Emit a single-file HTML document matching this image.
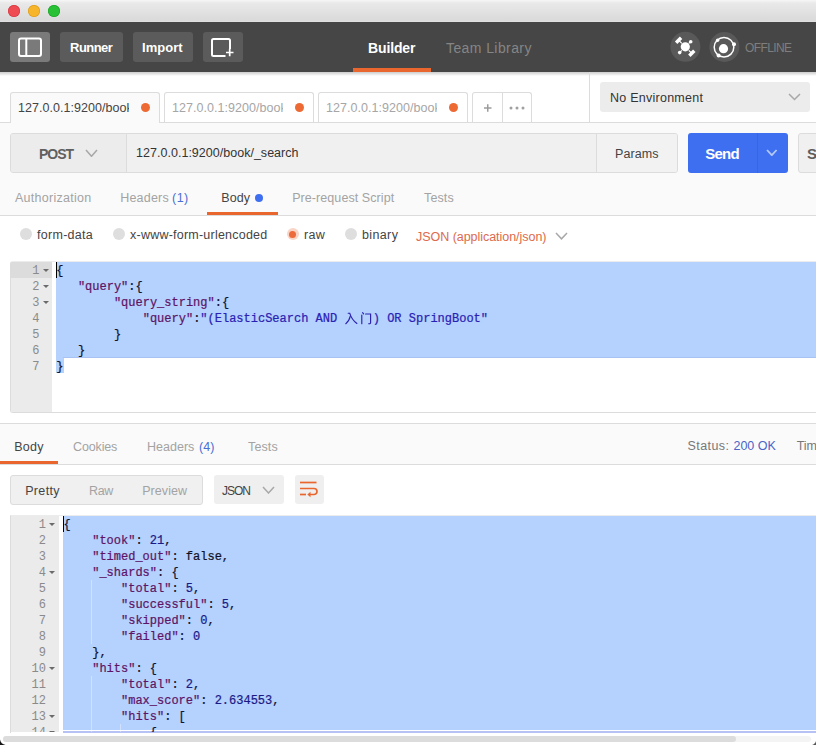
<!DOCTYPE html>
<html>
<head>
<meta charset="utf-8">
<title>Postman</title>
<style>
*{box-sizing:border-box;margin:0;padding:0}
html,body{width:816px;height:745px;overflow:hidden;background:#fff;font-family:"Liberation Sans",sans-serif;}
#app{position:relative;width:816px;height:745px;overflow:hidden;background:#fff}
.a{position:absolute}
.t{position:absolute;white-space:nowrap;line-height:1.2}
.tl{position:absolute;top:4.700px;width:12px;height:12px;border-radius:50%}
.btn{position:absolute;top:32px;height:30px;border-radius:3px;background:#5b5b5b}
.tab{position:absolute;top:92px;height:31px;border:1px solid #dcdcdc;border-bottom:none;border-radius:3px 3px 0 0;background:#fff}
.dot{position:absolute;top:103px;width:9px;height:9px;border-radius:50%;background:#ee6a34}
.mono{position:absolute;margin-top:1px;font-family:"Liberation Mono",monospace;font-size:12px;line-height:16px;white-space:pre;color:#13132e;letter-spacing:0;-webkit-text-stroke:0.220px}
.ln{position:absolute;margin-top:1px;text-align:right;color:#8a8a8a;font-family:"Liberation Mono",monospace;font-size:12px;line-height:16px}
.k{color:#5e1466}
.s{color:#2a22b4}
.n{color:#1a1a86}
.b{color:#111122}
.fold{position:absolute;width:0;height:0;border-left:3px solid transparent;border-right:3px solid transparent;border-top:3.500px solid #6a6a6a}
.radio{position:absolute;width:12px;height:12px;border-radius:50%;background:#dedede;top:228px}
.ig{position:absolute;width:1px;background:rgba(255,255,255,0.350)}
</style>
</head>
<body>
<div id="app">
<div class="a" style="left:0;top:0;width:816px;height:22px;background:linear-gradient(#f7f7f7 0%,#e9e9e9 14%,#dadada 92%,#e2e2e2 100%)"></div>
<div class="tl" style="left:7.800px;background:#ee4b53;box-shadow:inset 0 0 0 0.700px #d63c44"></div>
<div class="tl" style="left:27.800px;background:#f6b52b;box-shadow:inset 0 0 0 0.700px #dd9e20"></div>
<div class="tl" style="left:47.900px;background:#28c135;box-shadow:inset 0 0 0 0.700px #1ea62a"></div>
<div class="a" style="left:0;top:22px;width:816px;height:50px;background:#464646"></div>
<div class="btn" style="left:10px;width:40px;background:#7a7a7a"></div>
<svg class="a" style="left:10px;top:32px" width="40" height="30" viewBox="0 0 40 30"><rect x="9" y="6.500" width="22" height="17.500" rx="2" fill="none" stroke="#fff" stroke-width="2"/><line x1="16.300" y1="7" x2="16.300" y2="24" stroke="#fff" stroke-width="2"/></svg>
<div class="btn" style="left:60px;width:63px"></div>
<div class="btn" style="left:133px;width:60px"></div>
<div class="btn" style="left:203px;width:40px"></div>
<svg class="a" style="left:203px;top:32px" width="40" height="30" viewBox="0 0 40 30"><path d="M27 17V8.500a1.500 1.500 0 0 0-1.500-1.500h-15a1.500 1.500 0 0 0-1.500 1.500v14a1.500 1.500 0 0 0 1.500 1.500h12" fill="none" stroke="#fff" stroke-width="2"/><path d="M23 20.500h7.500M26.700 16.800v7.500" stroke="#fff" stroke-width="1.700"/></svg>
<div class="a" style="left:353px;top:68px;width:78px;height:4px;background:#e9672f"></div>
<svg class="a" style="left:660px;top:27px" width="90" height="40" viewBox="660 27 90 40">
<circle cx="685.400" cy="46.800" r="15" fill="#595959"/>
<circle cx="685.300" cy="46.800" r="4.600" fill="#fff"/>
<path d="M681.800 43.300L678.500 40M688.800 50.300L692 53.500M688.800 43.300L690.500 41.600M681.800 50.300L680 52.100" stroke="#fff" stroke-width="1.200"/>
<rect x="-3.500" y="-1.700" width="7" height="3.400" fill="#fff" transform="translate(678.600 40.300) rotate(-45)"/>
<rect x="-3.500" y="-1.700" width="7" height="3.400" fill="#fff" transform="translate(691.800 53.300) rotate(-45)"/>
<circle cx="690.700" cy="41.800" r="1.800" fill="#fff"/>
<circle cx="679.700" cy="52.600" r="1.800" fill="#fff"/>
<circle cx="724.400" cy="47" r="15" fill="#595959"/>
<circle cx="724" cy="47.200" r="9.800" fill="none" stroke="#fff" stroke-width="1.500"/>
<circle cx="723.500" cy="48.700" r="4.600" fill="#fff"/>
<circle cx="717.600" cy="40.200" r="1.700" fill="#fff"/>
<circle cx="734" cy="44.200" r="2" fill="#fff"/>
<circle cx="718.600" cy="55.600" r="2" fill="#fff"/>
</svg>
<div class="a" style="left:0;top:72px;width:816px;height:51px;background:#fff"></div>
<div class="a" style="left:0;top:72px;width:816px;height:4px;background:linear-gradient(rgba(0,0,0,0.200),rgba(0,0,0,0))"></div>
<div class="a" style="left:0;top:122px;width:816px;height:94px;background:#fafafa;border-top:1px solid #dcdcdc;border-bottom:1px solid #dcdcdc"></div>
<div class="tab" style="left:10px;width:150px;background:#fafafa;height:31px"></div>
<div class="dot" style="left:141px"></div>
<div class="tab" style="left:164px;width:150px;background:#fff;height:30px"></div>
<div class="dot" style="left:295px"></div>
<div class="tab" style="left:318px;width:150px;background:#fff;height:30px"></div>
<div class="dot" style="left:449px"></div>
<div class="tab" style="left:472px;width:60px;height:30px"></div>
<div class="a" style="left:502px;top:93px;width:1px;height:29px;background:#dcdcdc"></div>
<svg class="a" style="left:482px;top:102px" width="12" height="12" viewBox="0 0 12 12"><path d="M2 6h7.500M5.750 2.250v7.500" stroke="#9c9c9c" stroke-width="1.500"/></svg>
<svg class="a" style="left:507px;top:104px" width="20" height="8" viewBox="0 0 20 8"><circle cx="4" cy="4" r="1.500" fill="#a0a0a0"/><circle cx="10" cy="4" r="1.500" fill="#a0a0a0"/><circle cx="16" cy="4" r="1.500" fill="#a0a0a0"/></svg>
<div class="a" style="left:589px;top:72px;width:1px;height:50px;background:#dcdcdc"></div>
<div class="a" style="left:600px;top:82px;width:210px;height:30px;background:#ececec;border-radius:3px"></div>
<svg class="a" style="left:788.2px;top:93.3px" width="13" height="7.5" viewBox="-1 -1 13 7.5"><path d="M0 0L5.5 5.5L11 0" fill="none" stroke="#a8a8a8" stroke-width="1.5"/></svg>
<div class="a" style="left:10px;top:133px;width:668px;height:40px;background:#f0f0f0;border:1px solid #dcdcdc;border-radius:3px"></div>
<div class="a" style="left:11px;top:134px;width:116px;height:38px;background:#ececec;border-right:1px solid #dcdcdc;border-radius:2px 0 0 2px"></div>
<svg class="a" style="left:85.3px;top:149.2px" width="13" height="8.3" viewBox="-1 -1 13 8.3"><path d="M0 0L5.5 6.3L11 0" fill="none" stroke="#a8a8a8" stroke-width="1.5"/></svg>
<div class="a" style="left:596px;top:134px;width:1px;height:38px;background:#dcdcdc"></div>
<div class="a" style="left:597px;top:134px;width:80px;height:38px;background:#f2f2f2;border-radius:0 2px 2px 0"></div>
<div class="a" style="left:688px;top:133px;width:100px;height:40px;background:#3d6ff0;border-radius:3px"></div>
<div class="a" style="left:757px;top:133px;width:1px;height:40px;background:#3966dc"></div>
<svg class="a" style="left:766.4px;top:148.6px" width="11.6" height="7.2" viewBox="-1 -1 11.6 7.2"><path d="M0 0L4.8 5.2L9.6 0" fill="none" stroke="#b4c8f8" stroke-width="1.8"/></svg>
<div class="a" style="left:798px;top:133px;width:40px;height:40px;background:#f0f0f0;border:1px solid #dcdcdc;border-radius:3px"></div>
<div class="a" style="left:255px;top:193.500px;width:8px;height:8px;border-radius:50%;background:#3d6ff0"></div>
<div class="a" style="left:207px;top:212px;width:71px;height:3px;background:#e9672f"></div>
<div class="radio" style="left:20px"></div>
<div class="radio" style="left:112.500px"></div>
<div class="radio" style="left:286.500px;background:#f9d5c7"></div><div class="a" style="left:289px;top:230.500px;width:7px;height:7px;border-radius:50%;background:#ec6a3c"></div>
<div class="radio" style="left:344.500px"></div>
<svg class="a" style="left:555.2px;top:232.2px" width="13" height="7.8" viewBox="-1 -1 13 7.8"><path d="M0 0L5.5 5.8L11 0" fill="none" stroke="#a8a8a8" stroke-width="1.5"/></svg>
<div class="a" style="left:10px;top:261px;width:806px;height:152px;background:#fff;border:1px solid #dcdcdc;border-right:none;border-top-color:#ececec;border-radius:3px 0 0 3px"></div>
<div class="a" style="left:11px;top:262px;width:41px;height:150px;background:#ebebeb"></div>
<div class="a" style="left:11px;top:262px;width:41px;height:16px;background:#dcdcdc"></div>
<div class="a" style="left:56px;top:262px;width:760px;height:96px;background:#b5d1fd"></div>
<div class="a" style="left:56px;top:358px;width:7.500px;height:15px;background:#b5d1fd"></div>
<div class="a" style="left:63px;top:356.500px;width:753px;height:1.500px;background:#a8c2f4"></div>
<div class="a" style="left:56px;top:262px;width:1px;height:16px;background:#000"></div>
<div class="ln" style="left:11px;top:262px;width:28.500px">1</div>
<div class="fold" style="left:42.500px;top:269px"></div>
<div class="mono" style="left:56.300px;top:262px">{</div>
<div class="ln" style="left:11px;top:278px;width:28.500px">2</div>
<div class="fold" style="left:42.500px;top:285px"></div>
<div class="mono" style="left:56.300px;top:278px">   <span class="k">"query"</span>:{</div>
<div class="ln" style="left:11px;top:294px;width:28.500px">3</div>
<div class="fold" style="left:42.500px;top:301px"></div>
<div class="mono" style="left:56.300px;top:294px">        <span class="k">"query_string"</span>:{</div>
<div class="ln" style="left:11px;top:310px;width:28.500px">4</div>
<div class="mono" style="left:56.300px;top:310px">            <span class="k">"query"</span>:<span class="s">"(ElasticSearch AND <svg style="display:inline-block;vertical-align:top;overflow:visible" width="28.400" height="16" viewBox="343.600 311 28.400 16"><g fill="none" stroke="#2b22b0" stroke-width="1.150" stroke-linecap="round"><path d="M347.800 313.200h1.500c0.600 2 2.200 6.800 7.200 10.300"/><path d="M349.900 316.200c-0.700 3-2.200 5.800-4.500 7.500"/><path d="M361.400 315v8.700"/><path d="M362.200 312.700l1 1.200"/><path d="M365.200 314h5v8.800c0 0.800-0.500 1-1.800 0.900"/></g></svg>) OR SpringBoot"</span></div>
<div class="ln" style="left:11px;top:326px;width:28.500px">5</div>
<div class="mono" style="left:56.300px;top:326px">        }</div>
<div class="ln" style="left:11px;top:342px;width:28.500px">6</div>
<div class="mono" style="left:56.300px;top:342px">   }</div>
<div class="ln" style="left:11px;top:358px;width:28.500px">7</div>
<div class="mono" style="left:56.300px;top:358px">}</div>
<div class="a" style="left:0;top:423px;width:816px;height:42px;background:#fafafa;border-top:1px solid #dcdcdc;border-bottom:1px solid #dcdcdc"></div>
<div class="a" style="left:0;top:461px;width:58px;height:3px;background:#e9672f"></div>
<div class="a" style="left:10px;top:475px;width:192.500px;height:29.500px;background:#f0f0f0;border:1px solid #dcdcdc;border-radius:3px"></div>
<div class="a" style="left:213.500px;top:475.300px;width:70px;height:29.200px;background:#efefef;border-radius:3px"></div>
<svg class="a" style="left:261.7px;top:486.3px" width="13" height="8" viewBox="-1 -1 13 8"><path d="M0 0L5.5 6L11 0" fill="none" stroke="#a8a8a8" stroke-width="1.5"/></svg>
<div class="a" style="left:294.500px;top:475.300px;width:29.500px;height:29.200px;background:#efefef;border-radius:3px"></div>
<svg class="a" style="left:294px;top:475.400px" width="30" height="30" viewBox="294 475 30 30"><g fill="none" stroke="#e9672f" stroke-width="1.700"><path d="M300 482.500h16.500"/><path d="M300 488.500h14a3 3 0 0 1 0 6h-4.500"/><path d="M300 494.500h6"/></g><path d="M310.500 491.800l-3.200 2.700 3.200 2.700z" fill="#e9672f"/></svg>
<div class="a" style="left:10px;top:515px;width:806px;height:218px;background:#fff;border-left:1px solid #dcdcdc;border-top:1px solid #ececec"></div>
<div class="a" style="left:11px;top:516px;width:48px;height:216px;background:#ebebeb"></div>
<div class="a" style="left:63px;top:516px;width:753px;height:214px;background:#b5d1fd"></div>
<div class="a" style="left:63px;top:730.500px;width:753px;height:2px;background:#b6c2f6"></div>
<div class="a" style="left:63px;top:516px;width:1px;height:16px;background:#000"></div>
<div class="a" style="left:0;top:516px;width:816px;height:216px;overflow:hidden">
<div class="ig" style="left:91px;top:64px;height:64px"></div>
<div class="ig" style="left:91px;top:160px;height:56px"></div>
<div class="ig" style="left:120px;top:208px;height:8px"></div>
<div class="ln" style="left:11px;top:0px;width:35px">1</div>
<div class="fold" style="left:49.300px;top:7px"></div>
<div class="mono" style="left:63.400px;top:0px">{</div>
<div class="ln" style="left:11px;top:16px;width:35px">2</div>
<div class="mono" style="left:63.400px;top:16px">    <span class="k">"took"</span>: <span class="n">21</span>,</div>
<div class="ln" style="left:11px;top:32px;width:35px">3</div>
<div class="mono" style="left:63.400px;top:32px">    <span class="k">"timed_out"</span>: <span class="b">false</span>,</div>
<div class="ln" style="left:11px;top:48px;width:35px">4</div>
<div class="fold" style="left:49.300px;top:55px"></div>
<div class="mono" style="left:63.400px;top:48px">    <span class="k">"_shards"</span>: {</div>
<div class="ln" style="left:11px;top:64px;width:35px">5</div>
<div class="mono" style="left:63.400px;top:64px">        <span class="k">"total"</span>: <span class="n">5</span>,</div>
<div class="ln" style="left:11px;top:80px;width:35px">6</div>
<div class="mono" style="left:63.400px;top:80px">        <span class="k">"successful"</span>: <span class="n">5</span>,</div>
<div class="ln" style="left:11px;top:96px;width:35px">7</div>
<div class="mono" style="left:63.400px;top:96px">        <span class="k">"skipped"</span>: <span class="n">0</span>,</div>
<div class="ln" style="left:11px;top:112px;width:35px">8</div>
<div class="mono" style="left:63.400px;top:112px">        <span class="k">"failed"</span>: <span class="n">0</span></div>
<div class="ln" style="left:11px;top:128px;width:35px">9</div>
<div class="mono" style="left:63.400px;top:128px">    },</div>
<div class="ln" style="left:11px;top:144px;width:35px">10</div>
<div class="fold" style="left:49.300px;top:151px"></div>
<div class="mono" style="left:63.400px;top:144px">    <span class="k">"hits"</span>: {</div>
<div class="ln" style="left:11px;top:160px;width:35px">11</div>
<div class="mono" style="left:63.400px;top:160px">        <span class="k">"total"</span>: <span class="n">2</span>,</div>
<div class="ln" style="left:11px;top:176px;width:35px">12</div>
<div class="mono" style="left:63.400px;top:176px">        <span class="k">"max_score"</span>: <span class="n">2.634553</span>,</div>
<div class="ln" style="left:11px;top:192px;width:35px">13</div>
<div class="fold" style="left:49.300px;top:199px"></div>
<div class="mono" style="left:63.400px;top:192px">        <span class="k">"hits"</span>: [</div>
<div class="ln" style="left:11px;top:208px;width:35px">14</div>
<div class="fold" style="left:49.300px;top:215px"></div>
<div class="mono" style="left:63.400px;top:208px">            {</div>
</div>
<div class="a" style="left:0;top:732.500px;width:816px;height:13px;background:#fff"></div>
<div class="a" style="left:3px;top:736px;width:808px;height:6px;background:#f4f4f4;border-radius:3px"></div>
<div class="a" style="left:3px;top:736px;width:733px;height:6px;background:#dcdcdc;border-radius:3px"></div>
<svg class="a" style="left:0;top:737px" width="8" height="8" viewBox="0 0 8 8"><path d="M0 2.500C0.500 5.500 2.500 7.500 5.500 8H0z" fill="#151515"/></svg>
<svg class="a" style="left:808px;top:737px" width="8" height="8" viewBox="0 0 8 8"><path d="M8 4C7.500 6 6 7.500 4 8H8z" fill="#555"/></svg>
<div class="t" id="runner" style="left:70.05px;top:40.00px;font-size:13px;color:#fff;letter-spacing:-0.540px;font-weight:bold;">Runner</div>
<div class="t" id="import" style="left:142.10px;top:40.00px;font-size:13px;color:#fff;letter-spacing:0.000px;font-weight:bold;">Import</div>
<div class="t" id="builder" style="left:368.10px;top:39.90px;font-size:14px;color:#fff;letter-spacing:-0.150px;font-weight:bold;">Builder</div>
<div class="t" id="teamlib" style="left:446.00px;top:39.90px;font-size:14px;color:#858585;letter-spacing:0.409px;">Team Library</div>
<div class="t" id="offline" style="left:745.05px;top:41.10px;font-size:12px;color:#7e7e7e;letter-spacing:-0.600px;">OFFLINE</div>
<div class="t" id="tab0" style="left:18.10px;top:100.80px;font-size:12.5px;color:#444;letter-spacing:0.040px;width:111.10px;overflow:hidden;">127.0.0.1:9200/book</div>
<div class="t" id="tab1" style="left:172.10px;top:100.80px;font-size:12.5px;color:#a6a6a6;letter-spacing:0.040px;width:111.10px;overflow:hidden;">127.0.0.1:9200/book</div>
<div class="t" id="tab2" style="left:326.10px;top:100.80px;font-size:12.5px;color:#a6a6a6;letter-spacing:0.040px;width:111.10px;overflow:hidden;">127.0.0.1:9200/book</div>
<div class="t" id="noenv" style="left:610.10px;top:90.80px;font-size:12.5px;color:#333;letter-spacing:0.242px;">No Environment</div>
<div class="t" id="post" style="left:39.05px;top:145.90px;font-size:14px;color:#606060;letter-spacing:-1.050px;font-weight:bold;">POST</div>
<div class="t" id="url" style="left:136.10px;top:145.80px;font-size:12.5px;color:#333;letter-spacing:0.017px;">127.0.0.1:9200/book/_search</div>
<div class="t" id="params" style="left:615.10px;top:146.80px;font-size:12.5px;color:#444;letter-spacing:0.072px;">Params</div>
<div class="t" id="send" style="left:705.24px;top:144.80px;font-size:15px;color:#fff;letter-spacing:-0.780px;font-weight:bold;">Send</div>
<div class="t" id="save" style="left:807.05px;top:144.80px;font-size:15px;color:#5e5e5e;letter-spacing:0.000px;font-weight:bold;">S</div>
<div class="t" id="auth" style="left:15.00px;top:190.80px;font-size:12.5px;color:#a3a3a3;letter-spacing:0.263px;">Authorization</div>
<div class="t" id="hdr1" style="left:120.15px;top:190.80px;font-size:12.5px;color:#a3a3a3;letter-spacing:0.225px;">Headers</div>
<div class="t" id="hdr1n" style="left:172.10px;top:190.80px;font-size:12.5px;color:#4a6fd6;letter-spacing:0.450px;">(1)</div>
<div class="t" id="body1" style="left:221.15px;top:190.80px;font-size:12.5px;color:#444;letter-spacing:0.150px;">Body</div>
<div class="t" id="prereq" style="left:292.15px;top:190.80px;font-size:12.5px;color:#a3a3a3;letter-spacing:0.079px;">Pre-request Script</div>
<div class="t" id="tests1" style="left:424.05px;top:190.80px;font-size:12.5px;color:#a3a3a3;letter-spacing:0.113px;">Tests</div>
<div class="t" id="formdata" style="left:37.05px;top:227.80px;font-size:12.5px;color:#444;letter-spacing:0.281px;">form-data</div>
<div class="t" id="xwww" style="left:130.05px;top:227.80px;font-size:12.5px;color:#444;letter-spacing:0.225px;">x-www-form-urlencoded</div>
<div class="t" id="raw" style="left:304.10px;top:227.80px;font-size:12.5px;color:#444;letter-spacing:0.225px;">raw</div>
<div class="t" id="binary" style="left:362.05px;top:227.80px;font-size:12.5px;color:#444;letter-spacing:0.360px;">binary</div>
<div class="t" id="jsonapp" style="left:416.05px;top:229.80px;font-size:12.5px;color:#dd6a4c;letter-spacing:-0.041px;">JSON (application/json)</div>
<div class="t" id="body2" style="left:14.15px;top:439.80px;font-size:12.5px;color:#444;letter-spacing:0.300px;">Body</div>
<div class="t" id="cookies" style="left:73.10px;top:439.80px;font-size:12.5px;color:#a3a3a3;letter-spacing:-0.150px;">Cookies</div>
<div class="t" id="hdr2" style="left:147.10px;top:439.80px;font-size:12.5px;color:#a3a3a3;letter-spacing:0.000px;">Headers</div>
<div class="t" id="hdr2n" style="left:199.05px;top:439.80px;font-size:12.5px;color:#4a6fd6;letter-spacing:0.000px;">(4)</div>
<div class="t" id="tests2" style="left:248.05px;top:439.80px;font-size:12.5px;color:#a3a3a3;letter-spacing:0.113px;">Tests</div>
<div class="t" id="status" style="left:687.53px;top:438.80px;font-size:12.5px;color:#777;letter-spacing:0.420px;">Status:</div>
<div class="t" id="ok" style="left:733.43px;top:438.80px;font-size:12.5px;color:#4a64c8;letter-spacing:0.018px;">200 OK</div>
<div class="t" id="time" style="left:796.67px;top:438.80px;font-size:12.5px;color:#777;letter-spacing:0.000px;">Time:</div>
<div class="t" id="pretty" style="left:25.15px;top:483.80px;font-size:12.5px;color:#444;letter-spacing:0.360px;">Pretty</div>
<div class="t" id="raw2" style="left:89.10px;top:483.80px;font-size:12.5px;color:#a3a3a3;letter-spacing:-0.450px;">Raw</div>
<div class="t" id="preview" style="left:142.15px;top:483.80px;font-size:12.5px;color:#a3a3a3;letter-spacing:0.075px;">Preview</div>
<div class="t" id="json2" style="left:222.00px;top:484.10px;font-size:12px;color:#444;letter-spacing:-1.050px;">JSON</div>
</div>
</body>
</html>
